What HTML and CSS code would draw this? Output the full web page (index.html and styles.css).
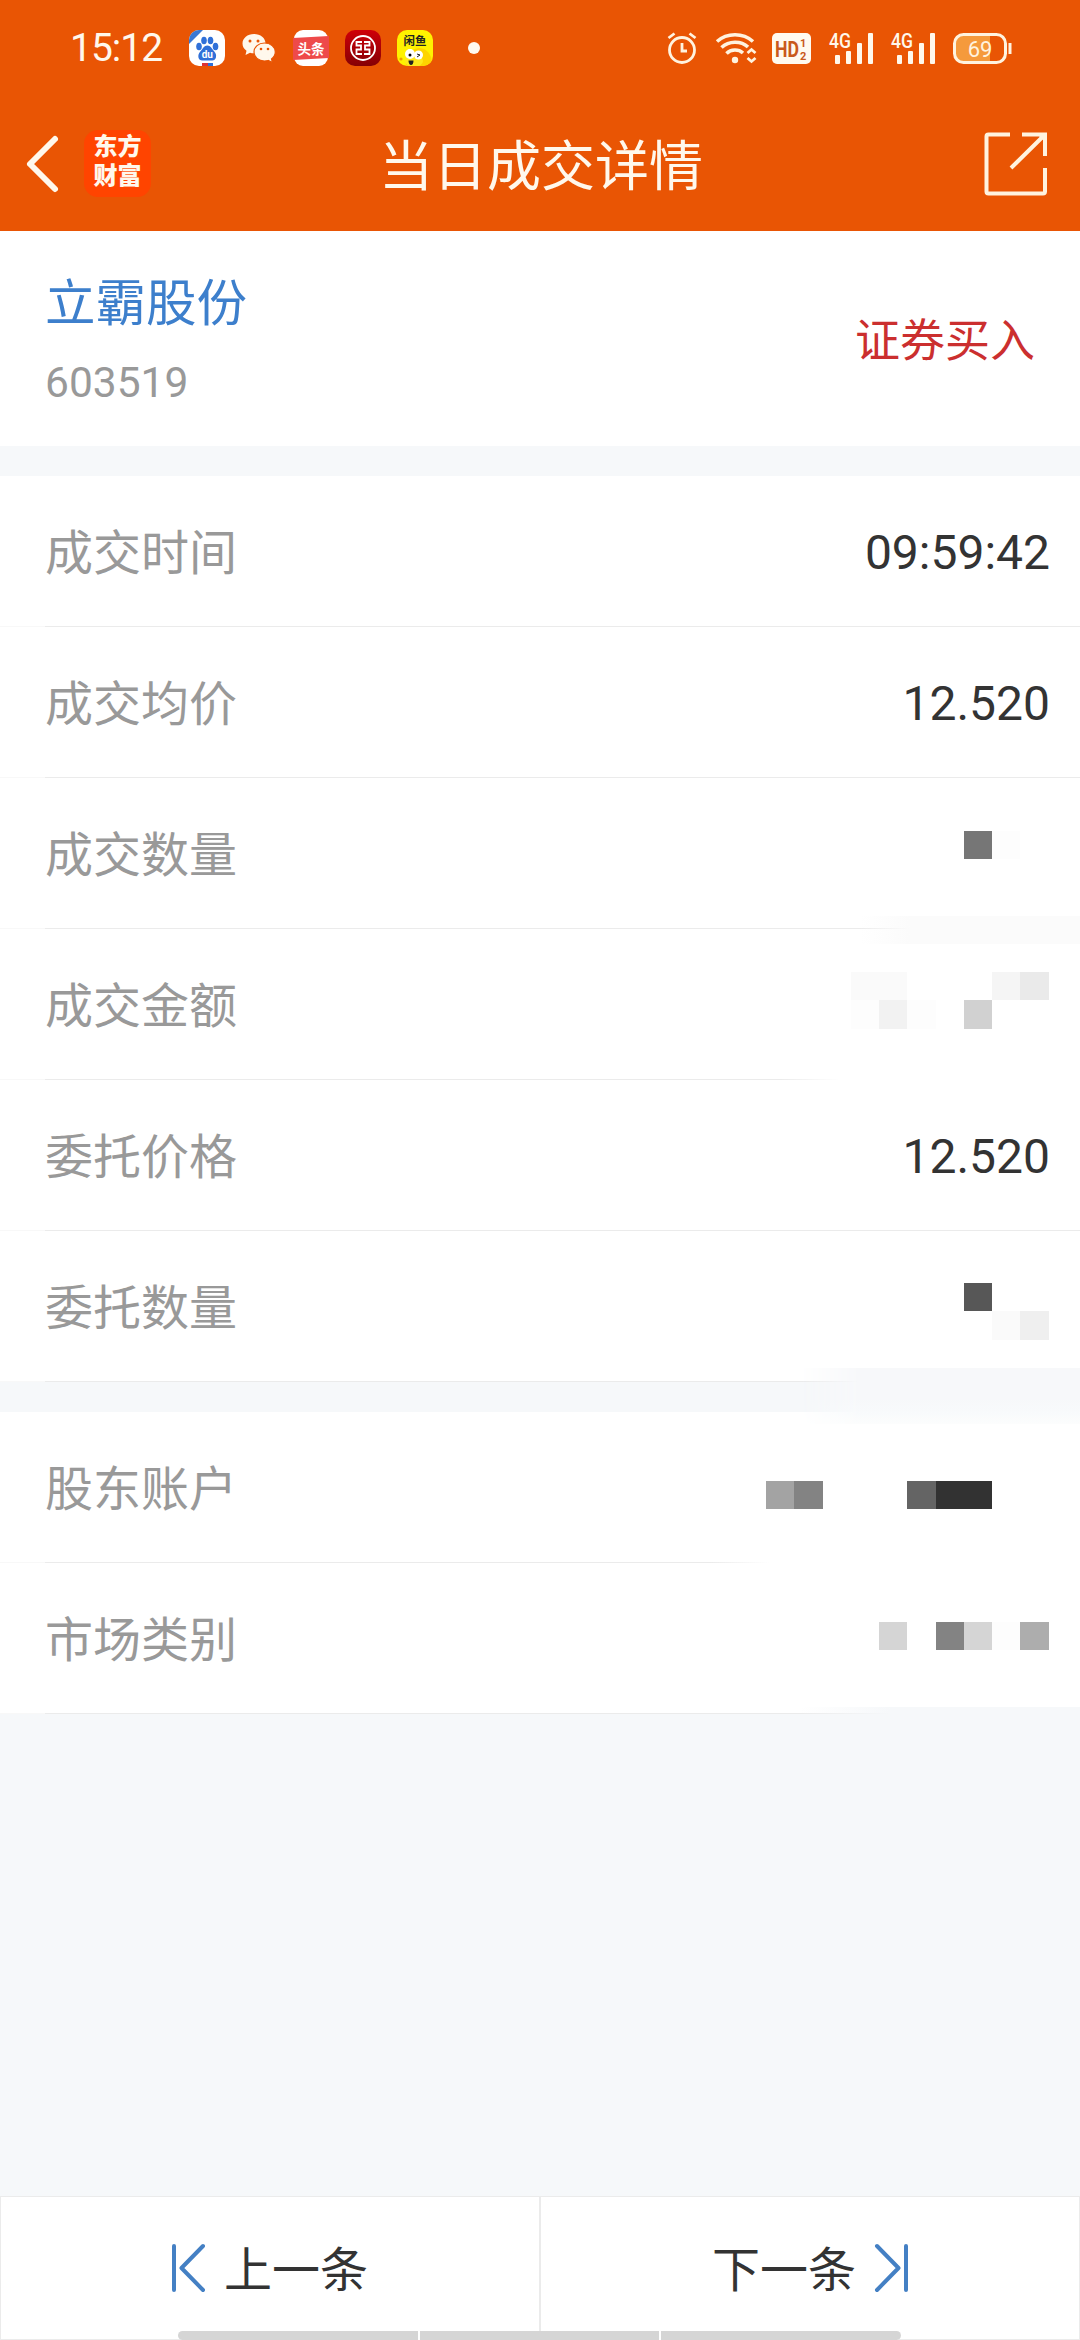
FILE: index.html
```
<!DOCTYPE html>
<html lang="zh-CN">
<head>
  <meta charset="UTF-8">
  <meta name="viewport" content="width=device-width,initial-scale=1.0">
  <title>当日成交详情</title>
  <link rel="stylesheet" href="styles.css">
</head>
<body>
<div class="page">
  <header class="header">
    <div class="status-bar">
      <span class="clock">15:12</span>
      <div class="app-icons">
        <svg width="36" height="36" viewBox="0 0 36 36">
          <defs><clipPath id="tile"><rect width="36" height="36" rx="10"/></clipPath></defs>
          <g clip-path="url(#tile)">
            <rect width="36" height="36" fill="#fff"/>
            <path d="M0 0H14L0 14Z" fill="#3a78d4"/>
            <g fill="#3070d8">
              <ellipse cx="10" cy="16.500" rx="2.800" ry="3.800"/>
              <ellipse cx="15" cy="10.500" rx="2.800" ry="3.800"/>
              <ellipse cx="21.500" cy="10.500" rx="2.800" ry="3.800"/>
              <ellipse cx="26.500" cy="16.500" rx="2.800" ry="3.800"/>
              <path d="M18.300 15.500c3.500 0 4.500 3.500 7 6 3.500 4 1.500 9-2 9h-10c-4 0-5.500-5-2-9 2.500-2.500 3.500-6 7-6z"/>
            </g>
            <text x="18.300" y="28" class="du">du</text>
            <path d="M13 33h6v3h-6z" fill="#d33"/><path d="M19 33h5v3h-5z" fill="#3070d8"/>
          </g>
        </svg>
        <svg class="wechat" width="34" height="30" viewBox="0 0 34 30">
          <path d="M12 1C5.500 1 .5 5.200.5 10.500c0 3 1.600 5.600 4 7.300L3.500 22l4.500-2.200c1.300.4 2.600.5 4 .5 6.500 0 11.500-4.300 11.500-9.800S18.500 1 12 1z" fill="#fff8ec"/>
          <path d="M22.500 10c-6 0-10.500 4-10.500 9s4.500 9 10.500 9c1.300 0 2.600-.2 3.700-.5L30.500 29.500l-1-3.500c2.300-1.700 3.800-4.200 3.800-7 0-5-4.800-9-10.800-9z" fill="#fff8ec" stroke="#e95504" stroke-width="1.200"/>
          <g fill="#e95504"><circle cx="8" cy="8" r="1.500"/><circle cx="16" cy="8" r="1.500"/><circle cx="19" cy="16" r="1.300"/><circle cx="26" cy="16" r="1.300"/></g>
        </svg>
        <svg width="36" height="36" viewBox="0 0 36 36">
          <rect x="1" width="34" height="36" rx="9" fill="#fff"/>
          <path d="M0 8 36 6V28L0 30Z" fill="#ee4a4a"/>
          <text x="18" y="23.500" class="toutiao">头条</text>
        </svg>
        <svg width="36" height="36" viewBox="0 0 36 36">
          <defs><linearGradient id="icbc" x2="0" y2="1"><stop stop-color="#cf0008"/><stop offset="1" stop-color="#850005"/></linearGradient></defs>
          <rect width="36" height="36" rx="10" fill="url(#icbc)"/>
          <g fill="none" stroke="#fff" stroke-width="1.800">
            <circle cx="18" cy="18" r="12"/>
            <path d="M17 12H11.500V15.500H16V19.500H11.500V24H17M19 12H24.500V15.500H20V19.500H24.500V24H19"/>
          </g>
        </svg>
        <svg width="36" height="36" viewBox="0 0 36 36">
          <g clip-path="url(#tile)">
            <rect width="36" height="36" fill="#fff200"/>
            <path d="M9 36c-1-9 3-17 13-18 6 0 10 4 12 9l2 9z" fill="#fed400"/>
            <ellipse cx="17" cy="31" rx="9" ry="6" fill="#ffe81a"/>
            <circle cx="13" cy="24" r="5" fill="#fff"/><circle cx="21.500" cy="25" r="4.500" fill="#fff"/>
            <circle cx="13" cy="25" r="1.500"/>
            <path d="M20 24l3 1-3 2" fill="none" stroke="#222"/>
            <path d="M11.500 30.500h5c0 3-1 4.500-2.500 4.500s-2.500-2-2.500-4.500z" fill="#222"/>
            <circle cx="4" cy="29" r="1.600" fill="#f0a000"/>
            <text x="18" y="15" class="xianyu">闲鱼</text>
          </g>
        </svg>
      </div>
      <i class="more-dot"></i>
      <div class="system-icons">
        <svg width="30" height="32" viewBox="0 0 30 32" fill="none" stroke="#fff3df" stroke-width="2.800">
          <circle cx="15" cy="18" r="12.500"/>
          <path d="M1.500 6 7.500 1.500M28.500 6 22.500 1.500M15 11V19H20"/>
        </svg>
        <svg class="wifi" width="40" height="32" viewBox="0 0 40 32" fill="none" stroke="#fff3df" stroke-width="3.600">
          <path d="M1 9.500C11 .5 27 .5 37 9.500M5.500 15.500C13 8.500 25 8.500 32 15M10.500 21.500C15 17 22.500 17 27 21"/>
          <circle cx="19" cy="28" r="3.200" fill="#fff3df" stroke="none"/>
          <path d="M31.500 21 35.500 17.500 39.500 21M31.500 26 35.500 29.500 39.500 26" stroke-width="2.800"/>
        </svg>
        <svg class="hd" width="39" height="31" viewBox="0 0 39 31">
          <rect width="39" height="31" rx="5" fill="#fffaf0"/>
          <text x="3" y="23.500" class="hd-text" textLength="24" lengthAdjust="spacingAndGlyphs">HD</text>
          <text x="28" y="13.500" class="hd-num" textLength="7">1</text>
          <text x="28" y="27" class="hd-num" textLength="7">2</text>
        </svg>
        <svg class="signal" width="44" height="31" viewBox="0 0 44 31" fill="#fff8ec">
          <text x="0" y="15" class="net" textLength="22" lengthAdjust="spacingAndGlyphs">4G</text>
          <rect x="6" y="22" width="5" height="9" rx="1"/><rect x="17" y="18" width="5" height="13" rx="1"/><rect x="28" y="10" width="5" height="21" rx="1"/><rect x="39" width="5" height="31" rx="1"/>
        </svg>
        <svg class="signal" width="44" height="31" viewBox="0 0 44 31" fill="#fff8ec">
          <text x="0" y="15" class="net" textLength="22" lengthAdjust="spacingAndGlyphs">4G</text>
          <rect x="6" y="22" width="5" height="9" rx="1"/><rect x="17" y="18" width="5" height="13" rx="1"/><rect x="28" y="10" width="5" height="21" rx="1"/><rect x="39" width="5" height="31" rx="1"/>
        </svg>
        <svg class="battery" width="59" height="31" viewBox="0 0 59 31">
          <path d="M10 2H37V29H10Q2 29 2 21V10Q2 2 10 2Z" fill="#f59a3c"/>
          <rect x="1.500" y="1.500" width="51" height="28" rx="9" fill="none" stroke="#fff3df" stroke-width="3"/>
          <path d="M57 10V21" stroke="#fff3df" stroke-width="3"/>
          <text x="27" y="23.500" class="level">69</text>
        </svg>
      </div>
    </div>
    <div class="nav-bar">
      <div class="nav-left">
        <svg width="34" height="58" viewBox="0 0 34 58" fill="none" stroke="#fff8ec" stroke-width="6" stroke-linecap="round" stroke-linejoin="round">
          <path d="M29 4 4 29 29 54"/>
        </svg>
        <div class="brand"><span>东方</span><span>财富</span></div>
      </div>
      <h1 class="title">当日成交详情</h1>
      <svg class="share" width="64" height="64" viewBox="0 0 64 64" fill="none" stroke="#fff3df" stroke-width="4">
        <path d="M26 2.500H4.500Q2.500 2.500 2.500 4.500V59.500Q2.500 61.500 4.500 61.500H59Q61 61.500 61 59.500V36M38 2.500H61V24M60 3.500 27 36"/>
        <path d="M54 3H61V10Z" fill="#fff3df" stroke="none"/>
      </svg>
    </div>
  </header>

  <section class="stock">
    <div class="stock-info">
      <div class="stock-name">立霸股份</div>
      <div class="stock-code">603519</div>
    </div>
    <div class="trade-type">证券买入</div>
  </section>

  <section class="group">
    <div class="row"><span class="label">成交时间</span><span class="value">09:59:42</span></div>
    <div class="row"><span class="label">成交均价</span><span class="value">12.520</span></div>
    <div class="row">
      <span class="label">成交数量</span>
      <div class="mosaic amount"><i class="c8 g76"></i><i class="c9 gfd"></i></div>
      <div class="smear smear-amount"></div>
    </div>
    <div class="row fade-money">
      <span class="label">成交金额</span>
      <div class="mosaic money">
        <i class="c4 gfa"></i><i class="c5 gfa"></i><i class="c9 gf5"></i><i class="c10 gea"></i>
        <i class="r2 c4 gfd"></i><i class="r2 c5 gf2"></i><i class="r2 c6 gfd"></i><i class="r2 c8 gd1"></i>
      </div>
    </div>
    <div class="row"><span class="label">委托价格</span><span class="value">12.520</span></div>
    <div class="row">
      <span class="label">委托数量</span>
      <div class="mosaic entrust"><i class="c8 g57"></i><i class="r2 c9 gfa"></i><i class="r2 c10 gef"></i></div>
      <div class="smear smear-entrust"></div>
    </div>
  </section>

  <section class="group">
    <div class="row fade-account">
      <span class="label">股东账户</span>
      <div class="mosaic account"><i class="c1 ga3"></i><i class="c2 g83"></i><i class="c6 g64"></i><i class="c7 g32"></i><i class="c8 g32"></i></div>
    </div>
    <div class="row">
      <span class="label">市场类别</span>
      <div class="mosaic market"><i class="c5 gd5"></i><i class="c7 g83"></i><i class="c8 gd5"></i><i class="c9 gfd"></i><i class="c10 gad"></i></div>
      <div class="smear smear-market"></div>
    </div>
  </section>

  <footer class="pager">
    <div class="pager-item">
      <svg width="34" height="48" viewBox="0 0 34 48"><path d="M2 2V46M31 2 9.500 24 31 46"/></svg>
      <span>上一条</span>
    </div>
    <div class="pager-item">
      <span>下一条</span>
      <svg width="34" height="48" viewBox="0 0 34 48"><path d="M32 2V46M3 2 24.500 24 3 46"/></svg>
    </div>
    <div class="home-bar"><i></i><i></i><i></i></div>
  </footer>
</div>
</body>
</html>
```

FILE: styles.css
```
* {
  box-sizing: border-box;
}

body {
  margin: 0;
  background: #f6f8fa;
  font-family: Roboto, "Noto Sans CJK SC", sans-serif;
}

svg {
  display: block;
  flex: none;
  overflow: visible;
}

.page {
  display: flex;
  flex-direction: column;
  width: 1080px;
  height: 2340px;
  overflow: hidden;
}

.header {
  height: 231px;
  background: #e95504;
  color: #fff8ec;
}

/* status bar */
.status-bar {
  display: flex;
  align-items: center;
  height: 96px;
  padding: 0 68px 0 70px;
}

.clock {
  width: 119px;
  font-size: 39px;
  letter-spacing: -1px;
  white-space: nowrap;
}

.app-icons {
  display: flex;
  align-items: center;
  gap: 16px;
}

.wechat {
  margin: 0 1px;
}

.du {
  font: bold 10px Roboto, sans-serif;
  fill: #fff;
  text-anchor: middle;
}

.toutiao {
  font: bold 13.5px "Noto Sans CJK SC", sans-serif;
  fill: #fff;
  text-anchor: middle;
}

.xianyu {
  font: bold 11.5px "Noto Sans CJK SC", sans-serif;
  fill: #222;
  text-anchor: middle;
}

.more-dot {
  width: 12px;
  height: 12px;
  margin-left: 35px;
  border-radius: 50%;
  background: #fffaf0;
}

.system-icons {
  display: flex;
  align-items: center;
  margin-left: auto;
}

.wifi {
  margin-left: 19px;
}

.hd {
  margin-left: 16px;
}

.signal {
  margin-left: 18px;
}

.battery {
  margin-left: 18px;
}

.hd-text {
  font: bold 22px Roboto, sans-serif;
  fill: #c9591c;
}

.hd-num {
  font: bold 11px Roboto, sans-serif;
  fill: #c9591c;
}

.net {
  font: 500 20px Roboto, sans-serif;
}

.level {
  font: 22px Roboto, sans-serif;
  fill: #fff3df;
  text-anchor: middle;
}

/* title bar */
.nav-bar {
  display: flex;
  align-items: center;
  justify-content: space-between;
  height: 135px;
  padding: 0 32px 0 26px;
}

.nav-left {
  display: flex;
  align-items: center;
  gap: 24px;
  width: 134px;
}

.brand {
  display: flex;
  flex-direction: column;
  align-items: center;
  justify-content: center;
  width: 67px;
  height: 67px;
  padding-bottom: 3px;
  border-radius: 14px;
  background: #ff4400;
  font-size: 24px;
  font-weight: 900;
  line-height: 29px;
}

.title {
  margin: 0;
  padding: 9px 0 0 8px;
  font-size: 54px;
  font-weight: 400;
  line-height: 80px;
}

.nav-left,
.share {
  flex: none;
}

.share {
  margin-left: 70px;
}

/* stock summary */
.stock {
  display: flex;
  align-items: center;
  justify-content: space-between;
  height: 215px;
  padding: 0 45px;
  background: #fff;
}

.stock-info {
  padding-top: 11px;
}

.stock-name {
  color: #3d7fcc;
  font-size: 50.5px;
  line-height: 78px;
}

.stock-code {
  color: #999;
  font-size: 42.5px;
  line-height: 80px;
}

.trade-type {
  padding-bottom: 3px;
  color: #cb2f2f;
  font-size: 45px;
}

/* detail rows */
.group {
  margin-top: 30px;
  background: #fff;
}

.row {
  position: relative;
  display: flex;
  align-items: center;
  justify-content: space-between;
  height: 151px;
  padding: 0 30px 0 45px;
}

.row::after {
  content: "";
  position: absolute;
  left: 0;
  right: 0;
  bottom: 0;
  height: 1px;
  background: linear-gradient(to right, #f8f8f8 45px, #ebebeb 45px);
}

.fade-money::after {
  background: linear-gradient(to right, #f8f8f8 45px, #ebebeb 45px, #ebebeb 780px, #fff 840px);
}

.fade-account::after {
  background: linear-gradient(to right, #f8f8f8 45px, #ebebeb 45px, #ebebeb 710px, #fff 770px);
}

.label {
  padding-bottom: 6px;
  color: #999;
  font-size: 48px;
}

.value {
  padding-top: 1px;
  color: #333;
  font-size: 48px;
}

/* masked values */
.mosaic {
  display: grid;
  grid-template-columns: 28px 29px 28px 28px 28px 29px 28px 28px 28px 29px;
  grid-template-rows: 28px 29px;
  align-self: flex-start;
  margin-right: 1px;
}

.mosaic i {
  grid-row: 1;
}

.mosaic .r2 {
  grid-row: 2;
}

.amount {
  margin-top: 53px;
}

.money {
  margin-top: 43px;
}

.entrust {
  margin-top: 52px;
}

.account {
  margin-top: 69px;
}

.market {
  margin-top: 59px;
}

.c1 { grid-column: 1; }
.c2 { grid-column: 2; }
.c4 { grid-column: 4; }
.c5 { grid-column: 5; }
.c6 { grid-column: 6; }
.c7 { grid-column: 7; }
.c8 { grid-column: 8; }
.c9 { grid-column: 9; }
.c10 { grid-column: 10; }

.g32 { background: #323232; }
.g57 { background: #575757; }
.g64 { background: #646464; }
.g76 { background: #767676; }
.g83 { background: #838383; }
.ga3 { background: #a3a3a3; }
.gad { background: #adadad; }
.gd1 { background: #d1d1d1; }
.gd5 { background: #d5d5d5; }
.gea { background: #eaeaea; }
.gef { background: #efefef; }
.gf2 { background: #f2f2f2; }
.gf5 { background: #f5f5f5; }
.gfa { background: #fafafa; }
.gfd { background: #fdfdfd; }

/* smudges left over the separators */
.smear {
  position: absolute;
  right: 0;
  z-index: 1;
}

.smear-amount {
  top: 138px;
  width: 220px;
  height: 28px;
  background: linear-gradient(to right, rgba(251, 251, 251, 0), #fbfbfb 50px);
}

.smear-entrust {
  top: 137px;
  width: 280px;
  height: 56px;
  background: linear-gradient(to bottom, #f7f8fa 30px, #f8fafc 44px, #fcfdfd);
  -webkit-mask: linear-gradient(to right, transparent, #000 60px);
  mask: linear-gradient(to right, transparent, #000 60px);
}

.smear-market {
  top: 144px;
  width: 280px;
  height: 7px;
  background: linear-gradient(to right, rgba(246, 248, 250, 0), #f6f8fa 90px);
}

/* prev / next */
.pager {
  position: relative;
  display: flex;
  height: 144px;
  margin-top: auto;
}

.pager-item {
  display: flex;
  flex: 1;
  align-items: center;
  justify-content: center;
  gap: 18px;
  border: 1px solid #ebebeb;
  background: #fff;
  color: #333;
  font-size: 48px;
}

.pager-item span {
  padding-bottom: 4px;
}

.pager-item path {
  fill: none;
  stroke: #4480c4;
  stroke-width: 4;
  stroke-linecap: round;
  stroke-linejoin: round;
}

.home-bar {
  position: absolute;
  left: 178px;
  bottom: 0;
  display: flex;
  gap: 2px;
  width: 723px;
  height: 9px;
  border-radius: 5px;
  background: #fff;
  overflow: hidden;
}

.home-bar i {
  flex: 1;
  background: #d5d5d5;
}
```
